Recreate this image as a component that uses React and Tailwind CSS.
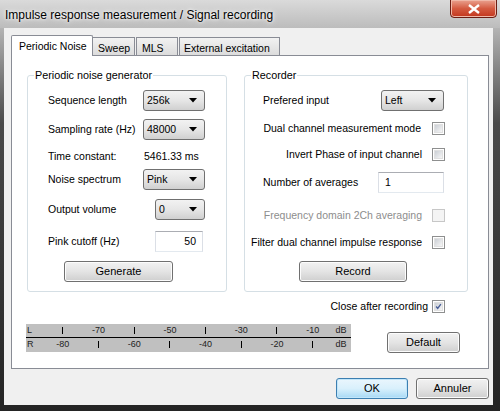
import React from 'react'

const ui = "font-['Liberation_Sans',Arial,sans-serif] text-[10.5px] text-black whitespace-nowrap"

function Combo({ value, className = '' }) {
  return (
    <div className={`h-[21px] rounded-[3px] border border-[#707070] bg-gradient-to-b from-[#f2f2f2] via-[#e6e6e6] to-[#d0d0d0] flex items-center justify-between pl-[3px] pr-[7px] ${className}`}>
      <span>{value}</span>
      <svg width="8" height="5" viewBox="0 0 8 5"><path d="M0 0h8L4 4.5z" fill="#000" /></svg>
    </div>
  )
}

function Edit({ value, className = '', right }) {
  return (
    <div className={`h-[21px] border border-[#abadb3] border-b-[#e3e9ef] border-x-[#dbdfe6] bg-white flex items-center px-[6px] ${right ? 'justify-end' : ''} ${className}`}>
      {value}
    </div>
  )
}

function Check({ checked, disabled }) {
  return (
    <div className={`w-[13px] h-[13px] shrink-0 border ${disabled ? 'border-[#c7c7c7] bg-[#f4f4f4]' : 'border-[#8e8f8f] bg-white'} p-[1px]`}>
      <div className={`w-full h-full ${disabled ? 'bg-[#f4f4f4]' : 'bg-gradient-to-br from-[#cbcfd5] to-[#f6f6f6] border border-[#e0e0e0]'} flex items-center justify-center`}>
        {checked && (
          <svg width="9" height="9" viewBox="0 0 9 9"><path d="M1.5 4.5 3.5 7 7.5 1.5" fill="none" stroke="#4a5f97" strokeWidth="1.8" /></svg>
        )}
      </div>
    </div>
  )
}

function Button({ children, className = '', primary }) {
  return (
    <div className={`h-[21px] rounded-[3px] border flex items-center justify-center text-[11px] ${primary ? 'border-[#3c7fb1] bg-gradient-to-b from-[#eaf6fd] via-[#d9f0fc] to-[#a7d9f5] shadow-[inset_0_0_0_1px_#c2e6fa]' : 'border-[#707070] bg-gradient-to-b from-[#f2f2f2] via-[#e4e4e4] to-[#cfcfcf] shadow-[inset_0_0_0_1px_#fcfcfc]'} ${className}`}>
      {children}
    </div>
  )
}

function Group({ title, className = '', children }) {
  return (
    <div className={`relative border border-[#d5dfe5] rounded-[3px] ${className}`}>
      <span className="absolute -top-[8px] left-[6px] px-[1px] bg-white leading-[14px] text-[10.8px]">{title}</span>
      {children}
    </div>
  )
}

function Meter() {
  const top = ['|', '-70', '|', '-50', '|', '-30', '|', '-10']
  const bottom = ['-80', '|', '-60', '|', '-40', '|', '-20', '|']
  const row = (lbl, items, cls) => (
    <div className={`flex items-center h-[14px] ${cls}`}>
      <span className="w-[19px] pl-[1px]">{lbl}</span>
      {items.map((t, i) => (
        <span key={i} className="w-[35.7px] text-center">
          {t === '|' ? <span className="inline-block w-px h-[7px] bg-black align-middle" /> : t}
        </span>
      ))}
      <span className="ml-[5px]">dB</span>
    </div>
  )
  return (
    <div className="w-[325px] h-[28px] bg-[#c0c0c0] text-[9px] text-[#222] -ml-px">
      {row('L', top, 'border-b border-black')}
      {row('R', bottom, 'h-[13px]')}
    </div>
  )
}

export default function App() {
  return (
    <div className={`${ui} w-[500px] h-[411px] flex flex-col bg-gradient-to-b from-[#d6d6d6] via-[#4a4a4a] via-30% to-[#242424] overflow-hidden`}>
      {/* Title bar */}
      <div className="h-[28px] flex justify-between shrink-0 bg-gradient-to-b from-[#dadada] to-[#bcbcbc]">
        <span className="text-[12px] pl-[5px] pt-[6px] [text-shadow:0_0_6px_#fff,0_0_3px_#fff]">Impulse response measurement / Signal recording</span>
        <div className="mr-[3px] w-[47px] h-[19px] -mt-px rounded-b-[4px] border border-[#6b1d13] bg-gradient-to-b from-[#e9a18f] via-[#d45a40] to-[#c2341b] flex items-center justify-center shadow-[inset_0_0_0_1px_#f0b8a8]">
          <svg width="12" height="10" viewBox="0 0 12 10"><path d="M1 1 11 9M11 1 1 9" stroke="#fff" strokeWidth="2.4" /></svg>
        </div>
      </div>

      {/* Client */}
      <div className="ml-[4px] mr-[7px] h-[377px] bg-[#f0f0f0] pt-[7px] pl-[7px] pr-[4px] flex flex-col">
        {/* Tabs */}
        <div className="flex items-end h-[20px]">
          <div className="h-[21px] w-[82px] -mb-px relative z-10 bg-white border border-b-0 border-[#898c95] rounded-t-[2px] pl-[7px] pt-[3px]">Periodic Noise</div>
          <div className="h-[18px] w-[42px] border border-b-0 border-l-0 border-[#898c95] bg-gradient-to-b from-[#f2f2f2] to-[#dcdcdc] pl-[5px] pt-[3px]">Sweep</div>
          <div className="h-[18px] w-[42px] ml-px border border-b-0 border-[#898c95] bg-gradient-to-b from-[#f2f2f2] to-[#dcdcdc] pl-[5px] pt-[3px]">MLS</div>
          <div className="h-[18px] w-[101px] ml-px border border-b-0 border-[#898c95] bg-gradient-to-b from-[#f2f2f2] to-[#dcdcdc] pl-[4px] pt-[3px]">External excitation</div>
        </div>

        {/* Panel */}
        <div className="w-[478px] h-[314px] border border-[#898c95] bg-white pl-[15px] pt-[19px]">
          <div className="flex gap-[17px]">
            <Group title="Periodic noise generator" className="w-[200px] h-[217px]">
              <div className="flex flex-col pl-[20px]">
                <div className="flex items-center h-[21px] mt-[14px]">
                  <span className="w-[95px]">Sequence length</span>
                  <Combo value="256k" className="w-[62px]" />
                </div>
                <div className="flex items-center h-[21px] mt-[8px]">
                  <span className="w-[95px]">Sampling rate (Hz)</span>
                  <Combo value="48000" className="w-[62px]" />
                </div>
                <div className="flex items-center h-[21px] mt-[6px]">
                  <span className="w-[96px]">Time constant:</span>
                  <span>5461.33 ms</span>
                </div>
                <div className="flex items-center h-[21px] mt-[2px]">
                  <span className="w-[95px]">Noise spectrum</span>
                  <Combo value="Pink" className="w-[62px]" />
                </div>
                <div className="flex items-center h-[21px] mt-[9px]">
                  <span className="w-[107px]">Output volume</span>
                  <Combo value="0" className="w-[50px]" />
                </div>
                <div className="flex items-center h-[21px] mt-[11px]">
                  <span className="w-[107px]">Pink cutoff (Hz)</span>
                  <Edit value="50" right className="w-[48px]" />
                </div>
                <Button className="w-[109px] ml-[16px] mt-[9px]">Generate</Button>
              </div>
            </Group>

            <Group title="Recorder" className="w-[224px] h-[217px]">
              <div className="flex flex-col pl-[18px] pr-[22px]">
                <div className="flex items-center justify-between h-[21px] mt-[14px]">
                  <span>Prefered input</span>
                  <Combo value="Left" className="w-[63px] mr-px" />
                </div>
                <div className="flex items-center justify-end gap-[11px] h-[21px] mt-[7px]">
                  <span>Dual channel measurement mode</span>
                  <Check />
                </div>
                <div className="flex items-center justify-end gap-[10px] h-[21px] mt-[5px]">
                  <span>Invert Phase of input channel</span>
                  <Check />
                </div>
                <div className="flex items-center justify-between h-[21px] mt-[7px]">
                  <span>Number of averages</span>
                  <Edit value="1" className="w-[66px] mr-px" />
                </div>
                <div className="flex items-center justify-end gap-[10px] h-[21px] mt-[12px] text-[#8d8d8d]">
                  <span>Frequency domain 2Ch averaging</span>
                  <Check disabled />
                </div>
                <div className="flex items-center justify-end gap-[10px] h-[21px] mt-[6px]">
                  <span>Filter dual channel impulse response</span>
                  <Check />
                </div>
                <Button className="w-[108px] ml-[36px] mt-[8px]">Record</Button>
              </div>
            </Group>
          </div>

          <div className="w-[441px] flex items-center justify-end gap-[4px] h-[13px] mt-[8px] pr-[23px]">
            <span>Close after recording</span>
            <Check checked />
          </div>

          <div className="flex items-start mt-[11px]">
            <Meter />
            <Button className="w-[73px] ml-[36px] mt-[8px]">Default</Button>
          </div>
        </div>

        {/* Dialog buttons */}
        <div className="flex justify-end gap-[8px] mt-[9px]">
          <Button primary className="w-[72px]">OK</Button>
          <Button className="w-[73px]">Annuler</Button>
        </div>
      </div>
    </div>
  )
}
